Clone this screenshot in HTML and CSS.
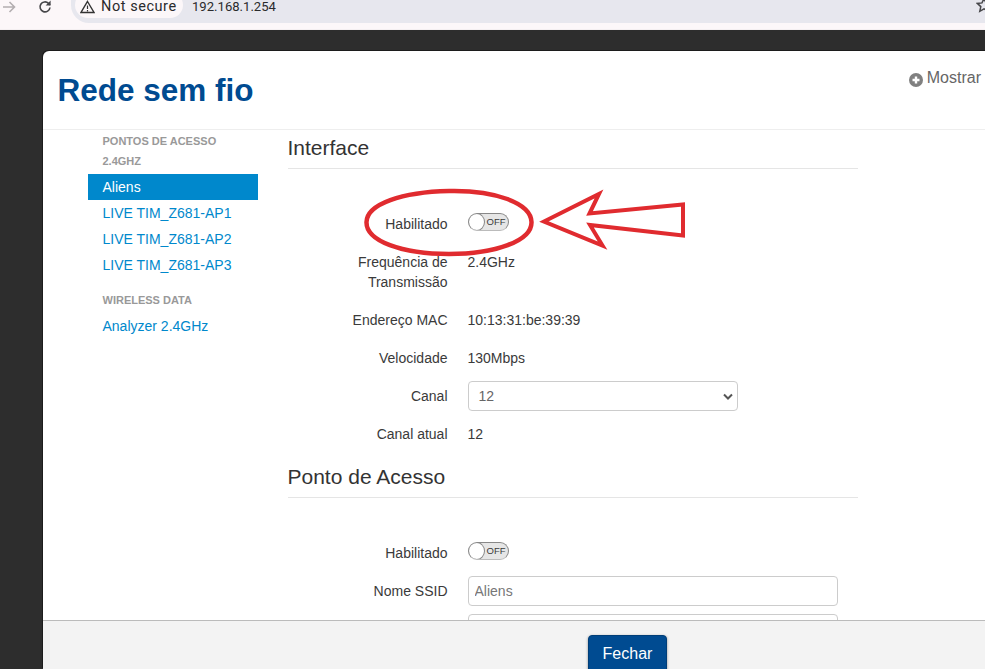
FILE: index.html
```html
<!DOCTYPE html>
<html>
<head>
<meta charset="utf-8">
<title>Rede sem fio</title>
<link rel="stylesheet" href="styles.css">
</head>
<body>
<!-- browser toolbar, cut off at the top -->
<div class="toolbar">
    <svg class="nav-forward" width="14" height="14" viewBox="0 0 14 14"><path d="M1 7h11M7.500 2l5 5-5 5" fill="none" stroke="#b3aeb0" stroke-width="1.600"/></svg>
    <svg class="nav-reload" width="16" height="16" viewBox="0 0 16 16"><path d="M13 8.500a5 5 0 1 1-1.500-4.200L13 6" fill="none" stroke="#47474a" stroke-width="1.600"/><path d="M13.600 1.600v5h-5z" fill="#47474a"/></svg>
    <div class="omnibox">
        <div class="chip">
            <svg width="15" height="14" viewBox="0 0 15 14"><path d="M7.500 1.500l6.500 11H1z" fill="none" stroke="#333" stroke-width="1.400"/><path d="M7.500 5.500v3.600M7.500 10v1.400" stroke="#333" stroke-width="1.200"/></svg>
            <span>Not secure</span>
        </div>
        <span class="url">192.168.1.254</span>
        <svg class="star" width="16" height="16" viewBox="0 0 16 16"><path d="M8 1.500l2 4.400 4.700.5-3.500 3.200 1 4.700L8 11.900l-4.200 2.400 1-4.700L1.300 6.400 6 5.900z" fill="none" stroke="#47474a" stroke-width="1.500"/></svg>
    </div>
</div>

<div class="backdrop">
    <div class="modal">
        <div class="modal-header">
            <h1>Rede sem fio</h1>
            <a class="show-more">
                <svg width="14" height="14" viewBox="0 0 14 14"><circle cx="7" cy="7" r="7" fill="#808080"/><path d="M7 3.500v7M3.500 7h7" stroke="#fff" stroke-width="2.400"/></svg>
                Mostrar
            </a>
        </div>
        <div class="modal-body">
            <div class="sidebar">
                <div class="nav-label">Pontos de acesso<br>2.4GHz</div>
                <a class="nav-item active">Aliens</a>
                <a class="nav-item">LIVE TIM_Z681-AP1</a>
                <a class="nav-item">LIVE TIM_Z681-AP2</a>
                <a class="nav-item">LIVE TIM_Z681-AP3</a>
                <div class="nav-label second">Wireless data</div>
                <a class="nav-item">Analyzer 2.4GHz</a>
            </div>
            <div class="content">
                <h2>Interface</h2>
                <div class="row first">
                    <label>Habilitado</label>
                    <div class="toggle"><span class="knob"></span><span class="toggle-text">OFF</span></div>
                </div>
                <div class="row">
                    <label>Frequência de Transmissão</label>
                    <div class="value">2.4GHz</div>
                </div>
                <div class="row">
                    <label>Endereço MAC</label>
                    <div class="value">10:13:31:be:39:39</div>
                </div>
                <div class="row">
                    <label>Velocidade</label>
                    <div class="value">130Mbps</div>
                </div>
                <div class="row">
                    <label>Canal</label>
                    <div class="select">12
                        <svg width="10" height="7" viewBox="0 0 10 7"><path d="M1 1.500l4 4 4-4" fill="none" stroke="#555" stroke-width="2"/></svg>
                    </div>
                </div>
                <div class="row">
                    <label>Canal atual</label>
                    <div class="value">12</div>
                </div>
                <h2 class="second">Ponto de Acesso</h2>
                <div class="row first">
                    <label>Habilitado</label>
                    <div class="toggle"><span class="knob"></span><span class="toggle-text">OFF</span></div>
                </div>
                <div class="row">
                    <label>Nome SSID</label>
                    <input class="text-input" placeholder="Aliens">
                </div>
                <div class="row">
                    <label></label>
                    <input class="text-input">
                </div>
            </div>
        </div>
        <div class="modal-footer">
            <button class="close-btn">Fechar</button>
        </div>
    </div>
</div>

<!-- red annotation drawn over the screenshot -->
<svg class="annotation" width="985" height="669" viewBox="0 0 985 669">
    <path d="M449 191C495 190 531 203 531.500 222C532 241 495 254 449 254C402 254 366 241 366.500 222C367 204 402 192 449 191Z" fill="none" stroke="#e02b2f" stroke-width="4.500"/>
    <path d="M544 221.500L599 194L589.500 213.500L683 204.500V235.500L590 225L602.500 245.500Z" fill="none" stroke="#e02b2f" stroke-width="4" stroke-linejoin="miter"/>
</svg>
</body>
</html>
```
FILE: styles.css
```css
* {
    box-sizing: border-box;
}
html, body {
    height: 100%;
}
body {
    margin: 0;
    background-color: #2d2d2d;
    display: flex;
    flex-direction: column;
    overflow: hidden;
    font-family: "Liberation Sans", Arial, sans-serif;
    font-size: 14px;
    line-height: 20px;
    color: #3a3a3a;
}

/* browser toolbar */
.toolbar {
    height: 30px;
    flex: none;
    background-color: #fcf7f9;
    border-bottom: 1px solid #f4eff1;
    display: flex;
    align-items: flex-start;
    overflow: hidden;
}
.nav-forward {
    margin: 0 0 0 2px;
    flex: none;
}
.nav-reload {
    margin: -1px 0 0 21px;
    flex: none;
}
.omnibox {
    margin: -12px -20px 0 18px;
    height: 35px;
    flex: 1;
    border-radius: 0 0 0 18px;
    background-color: #e7e7ee;
    display: flex;
    align-items: flex-end;
    padding: 0 0 5px 4px;
    font-family: Roboto, sans-serif;
}
.chip {
    width: 108px;
    height: 26px;
    background-color: #fcf7f9;
    border-radius: 13px;
    display: flex;
    align-items: flex-end;
    gap: 6px;
    padding: 0 0 4px 5px;
    font-size: 14.500px;
    letter-spacing: 0.550px;
    color: #2a2a2c;
    line-height: 14px;
}
.url {
    margin-left: 9px;
    font-size: 13.100px;
    line-height: 14px;
    padding-bottom: 4px;
    color: #2a2a2c;
}
.star {
    margin: 0 13px 5px auto;
}

/* dialog */
.backdrop {
    flex: 1;
    min-height: 0;
    padding: 21px 0 0 43px;
    display: flex;
}
.modal {
    flex: 1;
    min-width: 0;
    margin-right: -20px;
    background-color: #fff;
    border-radius: 6px 6px 0 0;
    display: flex;
    flex-direction: column;
    box-shadow: -1px -1px 0 #1c1c1c;
}
.modal-header {
    height: 79px;
    flex: none;
    border-bottom: 1px solid #eee;
    display: flex;
    justify-content: space-between;
    align-items: flex-start;
    padding: 0 24px 0 14.500px;
}
h1 {
    margin: 20px 0 0;
    font-size: 31.500px;
    line-height: 38px;
    font-weight: bold;
    color: #004b91;
}
.show-more {
    margin-top: 17px;
    font-size: 16px;
    line-height: 20px;
    color: #666;
    display: flex;
    align-items: center;
    gap: 4px;
}
.show-more svg {
    margin-top: 3px;
}
.modal-body {
    flex: 1;
    min-height: 0;
    overflow: hidden;
    display: flex;
    padding-left: 45px;
}
.sidebar {
    width: 170px;
    flex: none;
    margin-right: 29.500px;
}
.nav-label {
    padding: 1px 14.500px 0;
    font-size: 11px;
    line-height: 20px;
    font-weight: bold;
    text-transform: uppercase;
    color: #999;
    margin-bottom: 3px;
}
.nav-label.second {
    margin-top: 11px;
    margin-bottom: 3px;
}
.nav-item {
    display: block;
    height: 26px;
    padding: 3px 14.500px;
    color: #0088cc;
}
.nav-item.active {
    background-color: #0088cc;
    color: #fff;
}
.content {
    width: 570.500px;
    flex: none;
}
h2 {
    margin: 0;
    height: 39px;
    padding-top: 1px;
    font-size: 21px;
    line-height: 34px;
    font-weight: normal;
    color: #333;
    border-bottom: 1px solid #e5e5e5;
}
h2.second {
    margin-top: 9px;
    height: 40px;
    padding-top: 2px;
}
.row {
    display: flex;
    align-items: flex-start;
    gap: 20px;
    margin-bottom: 8px;
}
.row.first {
    margin-top: 40px;
    margin-bottom: 8px;
}
.row label {
    width: 160px;
    flex: none;
    padding: 5px 0;
    text-align: right;
}
.value {
    padding: 5px 0;
}
.toggle {
    margin-top: 4px;
    width: 41px;
    height: 18px;
    border-radius: 9px;
    border: 1px solid #888;
    border-bottom-color: #bbb;
    background-color: #e6e6e6;
    display: flex;
    align-items: center;
    overflow: hidden;
}
.knob {
    width: 15px;
    height: 16px;
    flex: none;
    border-radius: 50%;
    background-color: #fff;
    box-shadow: 0 0 0 1px #888;
}
.toggle-text {
    margin-left: 3px;
    font-size: 9.500px;
    line-height: 16px;
}
.select {
    width: 270px;
    height: 30px;
    border: 1px solid #ccc;
    border-radius: 4px;
    padding: 4px 10px;
    color: #666;
    display: flex;
    justify-content: space-between;
    align-items: center;
}
.select svg {
    margin-right: -6px;
}
.text-input {
    width: 370px;
    height: 30px;
    border: 1px solid #ccc;
    border-radius: 4px;
    padding: 4px 6px;
    font-family: inherit;
    font-size: 14px;
    color: #555;
    flex: none;
}
.text-input::placeholder {
    color: #777;
}
.modal-footer {
    height: 49px;
    flex: none;
    background-color: #f3f3f3;
    border-top: 1px solid #bbb;
    padding: 14px 0 0 545px;
    overflow: hidden;
}
.close-btn {
    width: 79px;
    height: 44px;
    border: 1px solid #003e78;
    border-radius: 4px;
    background-color: #004b91;
    color: #fff;
    font-family: inherit;
    font-size: 16px;
    padding: 0 0 6px;
    box-shadow: 0 1px 3px rgba(0, 0, 0, 0.4);
}
.annotation {
    position: absolute;
    top: 0;
    left: 0;
    pointer-events: none;
}
```
